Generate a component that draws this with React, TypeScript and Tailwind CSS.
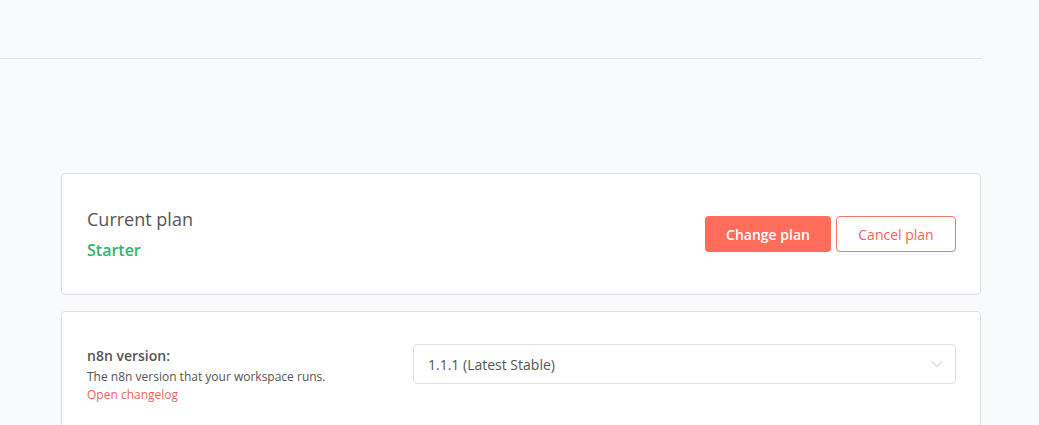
import React from 'react';

const font = { fontFamily: '"Open Sans", "Noto Sans", sans-serif' };

const Chevron = () => (
  <svg width="12" height="8" viewBox="0 0 12 8" fill="none">
    <path d="M1 1.5 L6 6.5 L11 1.5" stroke="#b8bcc4" strokeWidth="1" />
  </svg>
);

export default function App() {
  return (
    <div className="h-[425px] w-full overflow-hidden bg-[#f9fafc]" style={font}>
      <div className="h-[59px] w-[982px] border-b border-[#dfe2e8]" />

      <div className="ml-[61px] mt-[114px] flex w-[920px] flex-col gap-[16px]">
        {/* plan card */}
        <div className="flex h-[122px] items-center justify-between rounded-[4px] border border-[#dbdfe7] bg-white pl-[25px] pr-[24px]">
          <div className="flex flex-col">
            <span className="text-[18px] leading-[24px] text-[#555]">Current plan</span>
            <span className="mt-[8px] text-[16px] font-semibold leading-[22px] text-[#2fb56c]">Starter</span>
          </div>
          <div className="flex gap-[5px]">
            <button className="h-[36px] w-[126px] rounded-[4px] bg-[#ff6d5a] text-[14px] font-semibold text-white">
              Change plan
            </button>
            <button className="h-[36px] w-[120px] rounded-[4px] border border-[#f0786b] bg-white text-[14px] text-[#f0645a]">
              Cancel plan
            </button>
          </div>
        </div>

        {/* version card */}
        <div className="flex h-[140px] items-start rounded-[4px] border border-[#dbdfe7] bg-white pl-[25px] pr-[24px] pt-[32px]">
          <div className="mt-[2px] flex w-[326px] flex-col">
            <span className="text-[14px] font-semibold leading-[20px] text-[#555]">n8n version:</span>
            <span className="mt-[2px] text-[12px] leading-[18px] text-[#555]">The n8n version that your workspace runs.</span>
            <span className="text-[12px] leading-[18px] text-[#f0645a]">Open changelog</span>
          </div>
          <div className="flex h-[40px] flex-1 items-center justify-between rounded-[4px] border border-[#dbdfe7] bg-white pl-[14px] pr-[12px]">
            <span className="text-[14px] text-[#555]">1.1.1 (Latest Stable)</span>
            <Chevron />
          </div>
        </div>
      </div>
    </div>
  );
}
